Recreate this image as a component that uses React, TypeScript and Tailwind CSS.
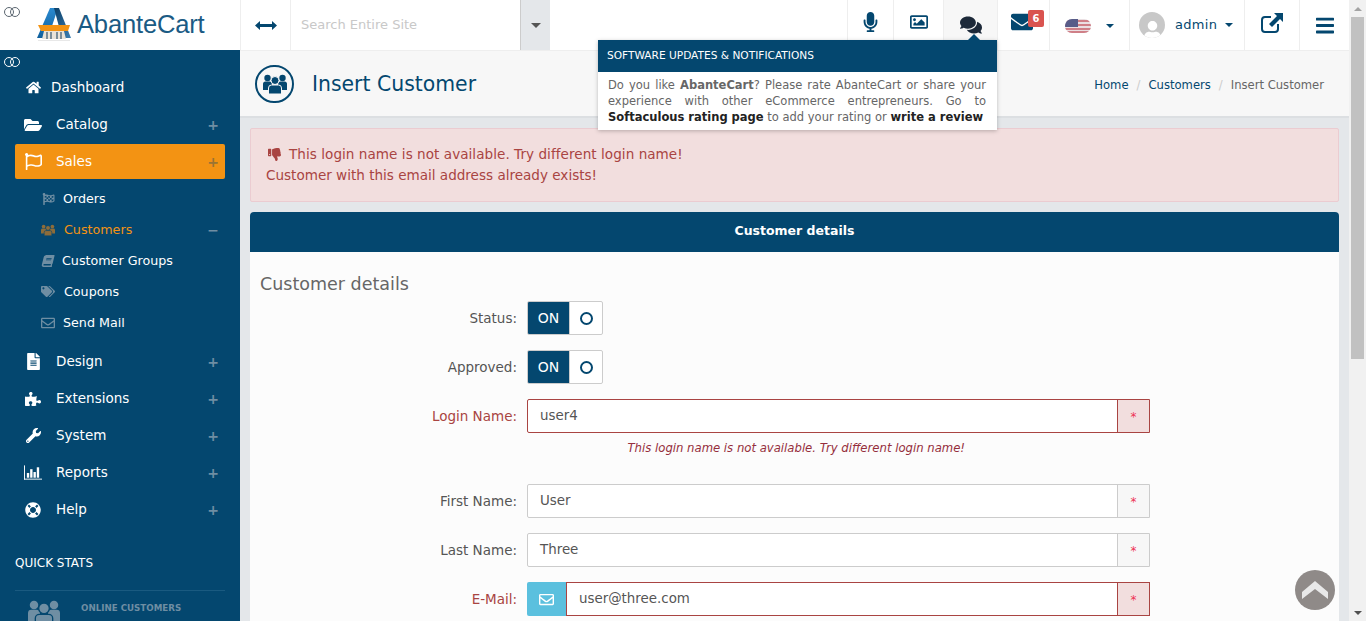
import type { ReactNode } from "react";
import {
    FaBars,
    FaBook,
    FaComments,
    FaEnvelope,
    FaFileAlt,
    FaFlagCheckered,
    FaFolderOpen,
    FaHome,
    FaLifeRing,
    FaMicrophone,
    FaPuzzlePiece,
    FaRegEnvelope,
    FaRegFlag,
    FaRegImage,
    FaTags,
    FaThumbsDown,
    FaWrench,
    FaUser,
} from "react-icons/fa";

function GroupIcon({ className, gap }: { className: string; gap: string }) {
    return (
        <svg viewBox="0 0 24 20" className={className} fill="currentColor">
            <circle cx="4.5" cy="4" r="3.2" />
            <circle cx="19.5" cy="4" r="3.2" />
            <path d="M0 10 a2.5 2.5 0 0 1 2.5 -2.5 h4 a2.5 2.5 0 0 1 2.5 2.5 v6 h-9 Z" />
            <path d="M15 10 a2.5 2.5 0 0 1 2.5 -2.5 h4 a2.5 2.5 0 0 1 2.5 2.5 v6 h-9 Z" />
            <circle cx="12" cy="6.5" r="4" stroke={gap} strokeWidth="1" />
            <path
                d="M5.5 14 a3 3 0 0 1 3 -3 h7 a3 3 0 0 1 3 3 v6 h-13 Z"
                stroke={gap}
                strokeWidth="1"
            />
        </svg>
    );
}

function ReportsIcon() {
    return (
        <svg width="19" height="15" viewBox="0 0 19 15" fill="currentColor">
            <rect x="0" y="0" width="1" height="15" />
            <rect x="0" y="14" width="19" height="1" />
            <rect x="3" y="8" width="2.5" height="5" />
            <rect x="6.5" y="4" width="2.5" height="9" />
            <rect x="10" y="7" width="2.5" height="6" />
            <rect x="13.5" y="2" width="2.5" height="11" />
        </svg>
    );
}

const mainItemsTop = [
    { label: "Dashboard", icon: <FaHome className="h-[15px] w-[15px]" />, textPad: "pl-[9px]", plus: false },
    { label: "Catalog", icon: <FaFolderOpen className="h-[16px] w-[18px]" />, textPad: "pl-[14px]", plus: true },
];

const subItems = [
    { label: "Orders", icon: <FaFlagCheckered className="h-[12px] w-[13px]" />, gap: "pl-[8px]" },
    { label: "Customers", icon: <GroupIcon className="h-[12px] w-[14px]" gap="#04476f" />, gap: "pl-[9px]", active: true },
    { label: "Customer Groups", icon: <FaBook className="h-[12px] w-[12px] -skew-x-[14deg]" />, gap: "pl-[7px]" },
    { label: "Coupons", icon: <FaTags className="h-[13px] w-[14px]" />, gap: "pl-[9px]" },
    { label: "Send Mail", icon: <FaRegEnvelope className="h-[14px] w-[14px]" />, gap: "pl-[8px]" },
];

const mainItemsBottom = [
    { label: "Design", icon: <FaFileAlt className="h-[17px] w-[15px]" /> },
    { label: "Extensions", icon: <FaPuzzlePiece className="h-[16px] w-[16px]" /> },
    { label: "System", icon: <FaWrench className="h-[15px] w-[15px]" /> },
    { label: "Reports", icon: <ReportsIcon /> },
    { label: "Help", icon: <FaLifeRing className="h-[16px] w-[16px]" /> },
];

function Rings({ light }: { light?: boolean }) {
    const color = light ? "border-white border-[1.7px]" : "border-[#5b6670] border-[1.5px]";
    return (
        <div className="flex">
            <span className={`h-[10px] w-[10px] rounded-full ${color}`} />
            <span className={`-ml-[4px] h-[10px] w-[10px] rounded-full ${color}`} />
        </div>
    );
}

function Logo() {
    return (
        <svg width="36" height="34" viewBox="0 0 36 34">
            <defs>
                <linearGradient id="logo-left" x1="0" y1="0" x2="0" y2="1">
                    <stop offset="0" stopColor="#2a8ad0" />
                    <stop offset="1" stopColor="#0f5f9c" />
                </linearGradient>
                <linearGradient id="logo-right" x1="0" y1="0" x2="1" y2="1">
                    <stop offset="0" stopColor="#0b3f68" />
                    <stop offset="1" stopColor="#3d7fb2" />
                </linearGradient>
            </defs>
            <path d="M1 30 L14 0 H22 L12 30 Z" fill="url(#logo-left)" />
            <path d="M18 0 H23 L35 30 H26 Z" fill="url(#logo-right)" />
            <path d="M2 17 H34 L32 23 H5 Z" fill="#f39313" />
            <path d="M8 23 H28 L30 31 H6 Z" fill="#e8e2d8" />
            <path d="M11 24 V31 M15 24 V31 M21 24 V31 M25 24 V31" stroke="#33556f" strokeWidth="1.2" />
            <rect x="2" y="32" width="32" height="1" fill="#e8e8e8" />
        </svg>
    );
}

function TopCell({ className, children }: { className: string; children: ReactNode }) {
    return (
        <div className={`flex h-[50px] shrink-0 items-center justify-center border-l border-[#eeeeee] ${className}`}>
            {children}
        </div>
    );
}

function Flag() {
    return (
        <svg width="26" height="14" viewBox="0 0 26 14">
            <defs>
                <clipPath id="flag-pill">
                    <rect width="26" height="14" rx="7" />
                </clipPath>
            </defs>
            <g clipPath="url(#flag-pill)">
                <rect width="26" height="14" fill="#eadfe2" />
                <rect y="1" width="26" height="2" fill="#cf7f87" />
                <rect y="5" width="26" height="2" fill="#cf7f87" />
                <rect y="9" width="26" height="2" fill="#cf7f87" />
                <rect y="12" width="26" height="2" fill="#cf7f87" />
                <rect width="13" height="8" fill="#585c88" />
            </g>
        </svg>
    );
}

function Caret({ className }: { className: string }) {
    return <span className={`h-0 w-0 border-x-[4px] border-t-[4px] border-x-transparent ${className}`} />;
}

function TopBar() {
    return (
        <header className="flex h-[50px] shrink-0 bg-white">
            <div className="relative flex h-[50px] w-[240px] shrink-0 items-center pl-[36px]">
                <span className="absolute left-[4px] top-[7px]">
                    <Rings />
                </span>
                <Logo />
                <span className="pl-[5px] text-[25.6px] leading-none tracking-[-0.2px] text-[#1b5b84] [font-family:'Liberation_Sans',sans-serif]">
                    AbanteCart
                </span>
            </div>
            <TopCell className="w-[50px] text-[#04476f]">
                <svg width="22" height="9" viewBox="0 0 22 9" fill="currentColor">
                    <path d="M0 4.5 L5 0 V3 H17 V0 L22 4.5 L17 9 V6 H5 V9 Z" />
                </svg>
            </TopCell>
            <div className="flex h-[50px] w-[230px] shrink-0 items-center border-l border-[#eeeeee] pl-[10px] text-[13px] text-[#c8c8c8]">
                Search Entire Site
            </div>
            <div className="flex h-[50px] w-[30px] shrink-0 items-center justify-center border-l border-[#cccccc] bg-[#e4e7ea]">
                <Caret className="border-t-[#555555] !border-x-[5px] !border-t-[5px]" />
            </div>
            <div className="flex-1" />
            <TopCell className="w-[46px] pb-[6px] text-[#04476f]">
                <FaMicrophone className="h-[20px] w-[15px]" />
            </TopCell>
            <TopCell className="w-[50px] pb-[6px] text-[#04476f]">
                <FaRegImage className="h-[18px] w-[18px]" />
            </TopCell>
            <TopCell className="w-[54px] bg-[#f7f7f7] text-[#1d2939]">
                <FaComments className="h-[22px] w-[22px]" />
            </TopCell>
            <TopCell className="w-[52px] text-[#04476f]">
                <span className="relative -ml-[3px] -mt-[6px]">
                    <FaEnvelope className="h-[22px] w-[22px]" />
                    <span className="absolute -right-[11px] -top-[1px] flex h-[17px] w-[16px] items-center justify-center rounded-[2px] bg-[#d9534f] text-[10px] font-bold text-white">
                        6
                    </span>
                </span>
            </TopCell>
            <TopCell className="w-[80px] justify-start gap-[15px] pl-[15px] pt-[2px] text-[#04476f]">
                <Flag />
                <Caret className="border-t-[#04476f]" />
            </TopCell>
            <TopCell className="w-[115px] justify-start pl-[9px] text-[#04476f]">
                <span className="relative flex h-[26px] w-[26px] items-end justify-center overflow-hidden rounded-full bg-[#c8c8c8] text-white">
                    <FaUser className="h-[19px] w-[19px] translate-y-[2px]" />
                </span>
                <span className="pl-[10px] text-[13px] tracking-[0.3px]">admin</span>
                <span className="flex pl-[8px]">
                    <Caret className="border-t-[#04476f]" />
                </span>
            </TopCell>
            <TopCell className="w-[55px] pb-[5px] text-[#04476f]">
                <svg width="22" height="20" viewBox="0 0 22 20" fill="none">
                    <path
                        d="M10 4 H4 a3 3 0 0 0 -3 3 V16 a3 3 0 0 0 3 3 H14 a3 3 0 0 0 3 -3 V11"
                        stroke="currentColor"
                        strokeWidth="2"
                    />
                    <path d="M13 0 H22 V9 L19 6 L11 14 L8 11 L16 3 Z" fill="currentColor" />
                </svg>
            </TopCell>
            <TopCell className="w-[50px] text-[#04476f]">
                <FaBars className="h-[21px] w-[18px]" />
            </TopCell>
        </header>
    );
}

function Plus({ minus, className }: { minus?: boolean; className?: string }) {
    return (
        <span className={`text-[14px] font-bold leading-none ${className ?? "text-[#6f8ea3]"}`}>
            {minus ? "−" : "+"}
        </span>
    );
}

function SideRow({
    label,
    icon,
    textPad = "pl-[14px]",
    plus = true,
    active = false,
}: {
    label: string;
    icon: ReactNode;
    textPad?: string;
    plus?: boolean;
    active?: boolean;
}) {
    return (
        <div className="flex h-[37px] items-center px-[15px]">
            <div
                className={`flex h-[35px] w-full items-center rounded-[2px] pl-[9px] pr-[6px] text-[13.5px] text-white ${active ? "bg-[#f39313]" : ""}`}
            >
                <span className="flex w-[18px] justify-center">{icon}</span>
                <span className={`flex-1 ${textPad}`}>{label}</span>
                {plus && <Plus className={active ? "text-[#9a7433]" : undefined} />}
            </div>
        </div>
    );
}

function Sidebar() {
    return (
        <aside className="relative w-[240px] shrink-0 overflow-hidden bg-[#04476f] pt-[19px] text-white">
            <span className="absolute left-[4px] top-[7px]">
                <Rings light />
            </span>
            {mainItemsTop.map((item) => (
                <SideRow key={item.label} {...item} />
            ))}
            <SideRow label="Sales" icon={<FaRegFlag className="h-[17px] w-[17px]" />} active />
            <div className="pb-[5px] pt-[3px]">
                {subItems.map((item) => (
                    <div
                        key={item.label}
                        className="flex h-[31px] items-center pl-[41px] pr-[21px] text-[12.7px]"
                    >
                        <span className="flex w-[14px] justify-center text-[#6f8ea3]">
                            <span className={item.active ? "text-[#8c6c3a]" : ""}>{item.icon}</span>
                        </span>
                        <span className={`flex-1 ${item.gap} ${item.active ? "text-[#f39313]" : ""}`}>
                            {item.label}
                        </span>
                        {item.active && <Plus minus />}
                    </div>
                ))}
            </div>
            {mainItemsBottom.map((item) => (
                <SideRow key={item.label} {...item} />
            ))}
            <div className="px-[15px] pt-[26px]">
                <div className="border-b border-[#1a5a80] pb-[18px] text-[12px] leading-[18px]">QUICK STATS</div>
                <div className="flex items-start pl-[13px] pt-[8px] text-[#6f8ea3]">
                    <GroupIcon className="h-[28px] w-[32px]" gap="#04476f" />
                    <span className="pl-[21px] pt-[1px] text-[8.7px] font-bold leading-[17px]">ONLINE CUSTOMERS</span>
                </div>
            </div>
        </aside>
    );
}

function PageTitle() {
    return (
        <div className="flex h-[68px] shrink-0 items-center border-b-2 border-t border-b-[#dcdfe2] border-t-[#eeeeee] bg-[#f7f7f7] pl-[15px] pr-[25px] text-[#04476f]">
            <span className="flex h-[38px] w-[39px] items-center justify-center rounded-full border-2 border-[#04476f]">
                <GroupIcon className="h-[20px] w-[24px]" gap="#f7f7f7" />
            </span>
            <h1 className="flex-1 pl-[18px] pt-[1px] text-[20.4px] font-normal">Insert Customer</h1>
            <nav className="flex items-center pt-[4px] text-[11.6px]">
                <span>Home</span>
                <span className="px-[8px] text-[#cccccc]">/</span>
                <span>Customers</span>
                <span className="px-[8px] text-[#cccccc]">/</span>
                <span className="text-[#666666]">Insert Customer</span>
            </nav>
        </div>
    );
}

function Toggle({ label }: { label: string }) {
    return (
        <div className="flex h-[34px] items-center">
            <label className="w-[277px] pr-[10px] text-right text-[13.5px] text-[#555555]">{label}</label>
            <div className="flex h-[34px] w-[76px] overflow-hidden rounded-[2px] border border-[#cccccc] bg-white">
                <span className="flex w-[41px] items-center justify-center bg-[#04476f] text-[14px] text-white">ON</span>
                <span className="flex flex-1 items-center justify-center border-l border-[#cccccc]">
                    <span className="h-[13px] w-[13px] rounded-full border-2 border-[#04476f]" />
                </span>
            </div>
        </div>
    );
}

function Field({
    label,
    value,
    error,
    email,
}: {
    label: string;
    value: string;
    error?: boolean;
    email?: boolean;
}) {
    const border = error ? "border-[#a94442]" : "border-[#cccccc]";
    return (
        <div className="flex h-[34px] items-center">
            <label
                className={`w-[277px] pr-[10px] text-right text-[13.5px] ${error ? "text-[#a94442]" : "text-[#555555]"}`}
            >
                {label}
            </label>
            {email && (
                <span className="flex h-[34px] w-[39px] items-center justify-center rounded-l-[2px] bg-[#5bc0de] text-white">
                    <FaRegEnvelope className="h-[15px] w-[15px]" />
                </span>
            )}
            <div className={`flex h-[34px] flex-1 border bg-white ${border} ${email ? "" : "rounded-l-[2px]"}`}>
                <span className="flex flex-1 items-center pl-[12px] pt-[1px] text-[13.4px] text-[#555555]">{value}</span>
                <span
                    className={`flex w-[32px] items-center justify-center border-l pt-[2px] text-[12px] text-[#ee3355] ${border} ${error ? "bg-[#f2dede]" : "bg-[#f7f7f7]"}`}
                >
                    *
                </span>
            </div>
        </div>
    );
}

function Form() {
    return (
        <section className="mt-[10px] flex-1 overflow-hidden rounded-t-[4px] bg-[#fcfcfc]">
            <div className="flex h-[40px] items-center justify-center bg-[#04476f] pb-[1px] text-[12.5px] font-bold text-white">
                Customer details
            </div>
            <div className="pl-[10px] pt-[19px]">
                <h2 className="text-[17.5px] font-normal leading-[26px] text-[#666666]">Customer details</h2>
            </div>
            <div className="flex w-[900px] flex-col pt-[4px]">
                <Toggle label="Status:" />
                <div className="h-[15px]" />
                <Toggle label="Approved:" />
                <div className="h-[15px]" />
                <Field label="Login Name:" value="user4" error />
                <p className="h-[51px] pr-[185px] pt-[7px] text-right text-[11.67px] italic leading-[16px] text-[#962f3d]">
                    This login name is not available. Try different login name!
                </p>
                <Field label="First Name:" value="User" />
                <div className="h-[15px]" />
                <Field label="Last Name:" value="Three" />
                <div className="h-[15px]" />
                <Field label="E-Mail:" value="user@three.com" error email />
            </div>
        </section>
    );
}

function Popup() {
    return (
        <div className="absolute left-[598px] top-[40px] z-10 w-[399px] bg-white shadow-[0_1px_4px_rgba(0,0,0,0.25)]">
            <span className="absolute -top-[6px] left-[370px] h-0 w-0 border-x-[6px] border-b-[6px] border-x-transparent border-b-[#04476f]" />
            <div className="flex h-[32px] items-center bg-[#04476f] pl-[9px] text-[10.6px] text-white">
                SOFTWARE UPDATES &amp; NOTIFICATIONS
            </div>
            <p className="pb-[5px] pl-[10px] pr-[11px] pt-[5px] text-justify text-[11.5px] leading-[16px] text-[#666666]">
                Do you like <b className="font-bold">AbanteCart</b>? Please rate AbanteCart or share your experience
                with other eCommerce entrepreneurs. Go to{" "}
                <b className="font-bold text-[#222222]">Softaculous rating page</b> to add your rating or{" "}
                <b className="font-bold text-[#222222]">write a review</b>
            </p>
        </div>
    );
}

function Scrollbar() {
    return (
        <div className="flex h-[621px] w-[17px] shrink-0 flex-col items-center bg-[#f1f1f1]">
            <div className="flex h-[17px] w-full items-center justify-center">
                <span className="h-0 w-0 border-x-[4px] border-b-[4px] border-x-transparent border-b-[#a3a3a3]" />
            </div>
            <div className="h-[342px] w-[13px] bg-[#c1c1c1]" />
            <div className="flex-1" />
            <div className="flex h-[17px] w-full items-center justify-center">
                <span className="h-0 w-0 border-x-[4px] border-t-[4px] border-x-transparent border-t-[#505050]" />
            </div>
        </div>
    );
}

export default function App() {
    return (
        <div className="relative flex h-[621px] w-[1366px] overflow-hidden bg-white text-[13px] [font-family:'DejaVu_Sans',sans-serif]">
            <div className="flex w-[1349px] flex-col">
                <TopBar />
                <div className="flex min-h-0 flex-1">
                    <Sidebar />
                    <main className="flex min-w-0 flex-1 flex-col bg-[#e4e7ea]">
                        <PageTitle />
                        <div className="flex min-h-0 flex-1 flex-col px-[10px] pt-[10px]">
                            <div className="h-[74px] shrink-0 rounded-[2px] border border-[#ebccd1] bg-[#f2dede] px-[15px] py-[15px] text-[13.55px] leading-[21px] text-[#a94442]">
                                <div className="flex items-center pl-[2px]">
                                    <FaThumbsDown className="h-[13px] w-[13px]" />
                                    <span className="pl-[8px] tracking-[0.05px]">
                                        This login name is not available. Try different login name!
                                    </span>
                                </div>
                                <div>Customer with this email address already exists!</div>
                            </div>
                            <Form />
                        </div>
                    </main>
                </div>
            </div>
            <Scrollbar />
            <Popup />
            <button className="absolute left-[1295px] top-[570px] flex h-[40px] w-[40px] items-center justify-center rounded-full bg-[#8f8a88] text-[#e8e8e8]">
                <svg width="26" height="18" viewBox="0 0 26 18" fill="currentColor">
                    <path d="M13 0 L26 11 V18 L13 8 L0 18 V11 Z" />
                </svg>
            </button>
        </div>
    );
}
